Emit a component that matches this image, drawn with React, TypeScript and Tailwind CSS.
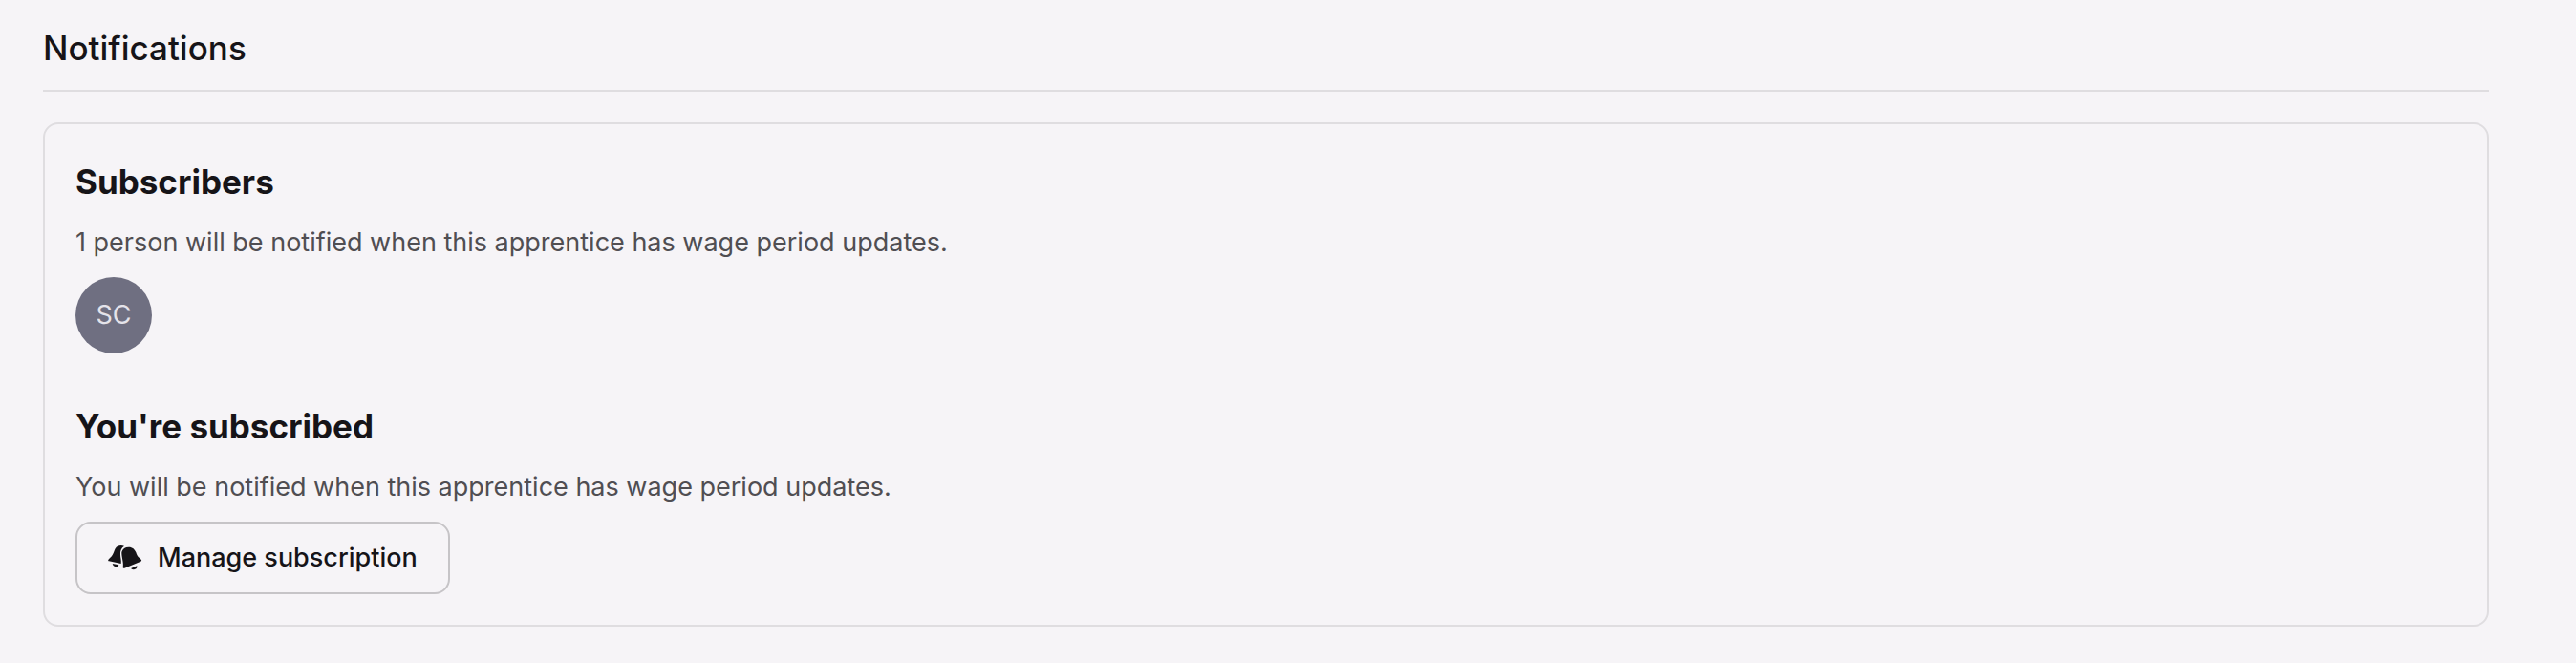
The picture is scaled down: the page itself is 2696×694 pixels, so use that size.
import React from 'react';

const BellsIcon: React.FC = () => (
  <svg viewBox="0 0 108 108" className="size-9 shrink-0" fill="currentColor" aria-hidden="true">
    <path d="M51 17C42 14 29 14 23 25C20 31 18 39 14 45C11 51 3 56 1 60C0 62 1 64 3 64L41 72C43 62 39 53 39 44C38 32 42 22 51 17Z" />
    <path d="M43 36C46 25 54 20 65 20C77 20 84 27 88 37C90 43 92 48 96 52C99 55 104 58 105 61C106 63 105 64 103 65L52 86C49 87 47 86 47 83C50 70 42 50 43 36Z" />
    <path d="M14 72L34 76C32 85 17 84 14 72Z" />
    <path d="M72 87L91 79C94 90 79 94 72 87Z" />
  </svg>
);

interface SectionProps {
  title: string;
  desc: string;
  children: React.ReactNode;
}

const Section: React.FC<SectionProps> = ({ title, desc, children }) => (
  <div className="flex flex-col items-start gap-4">
    <h3 className="text-[35px] leading-14 font-bold text-[#161418]">{title}</h3>
    <p className="text-[27px] leading-10 text-[#504e52]">{desc}</p>
    {children}
  </div>
);

const App: React.FC = () => {
  return (
    <div className="min-h-screen bg-[#f6f4f7] pt-[22px] pr-[91px] pb-8 pl-[45px] font-['Inter',sans-serif]">
      <h2 className="border-b-2 border-[#dfdde0] pb-4 text-[35px] leading-14 font-medium text-[#161418]">
        Notifications
      </h2>

      <div className="mt-8 flex flex-col gap-12 rounded-2xl border-2 border-[#dfdde0] p-8">
        <Section
          title="Subscribers"
          desc="1 person will be notified when this apprentice has wage period updates."
        >
          <div className="flex size-20 items-center justify-center rounded-full bg-[#6f6f81] text-[27px] text-[#e4e3ea]">
            SC
          </div>
        </Section>

        <Section
          title="You're subscribed"
          desc="You will be notified when this apprentice has wage period updates."
        >
          <button
            type="button"
            className="flex items-center gap-4 rounded-2xl border-2 border-[#c6c4c7] px-8 py-4 text-[27px] leading-10 font-medium text-[#161418]"
          >
            <BellsIcon />
            Manage subscription
          </button>
        </Section>
      </div>
    </div>
  );
};

export default App;
